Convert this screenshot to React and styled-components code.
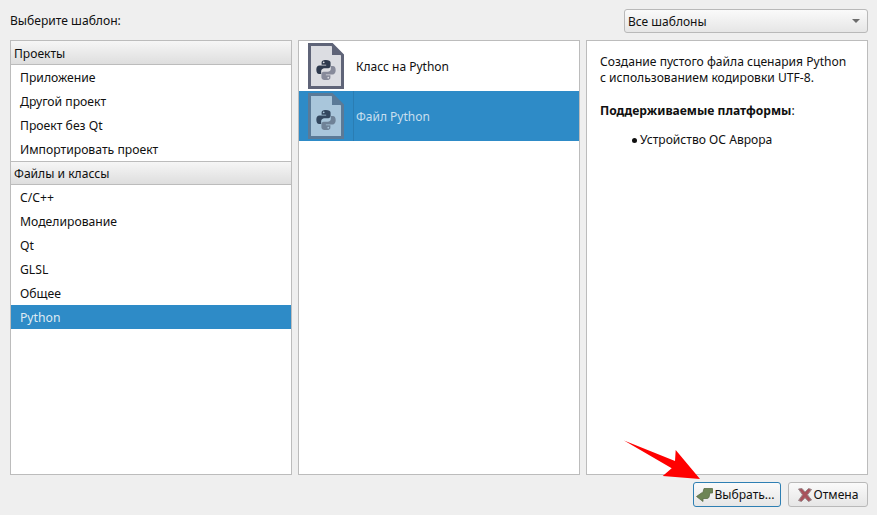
import styled, { createGlobalStyle } from "styled-components";

const Global = createGlobalStyle`
  html, body {
    margin: 0;
    padding: 0;
    background: #efefef;
  }
  body {
    font-family: "Noto Sans", "Open Sans", sans-serif;
    font-size: 12px;
    color: #101010;
  }
`;

const Dialog = styled.div`
  position: relative;
  width: 877px;
  height: 515px;
  overflow: hidden;
  box-sizing: border-box;
  padding: 9px 9px 8px 10px;
  display: flex;
  flex-direction: column;
  background: #efefef;
`;

const TopBar = styled.div`
  display: flex;
  align-items: center;
  justify-content: space-between;
  height: 24px;
  margin-bottom: 7px;
`;

const Label = styled.span`
  line-height: 24px;
  font-size: 12.1px;
`;

const Combo = styled.div`
  width: 244px;
  height: 24px;
  box-sizing: border-box;
  display: flex;
  align-items: center;
  justify-content: space-between;
  padding: 0 4px 0 3px;
  border: 1px solid #b9b9b9;
  border-radius: 3px;
  background: linear-gradient(#fafafa, #e6e6e6);
`;

const ComboArrow = styled.span`
  width: 0;
  height: 0;
  margin-right: 3px;
  border-left: 4px solid transparent;
  border-right: 4px solid transparent;
  border-top: 4px solid #6c6c6c;
`;

const Panels = styled.div`
  display: grid;
  grid-template-columns: 282px 282px 282px;
  column-gap: 6px;
  height: 435px;
`;

const Panel = styled.div`
  box-sizing: border-box;
  border: 1px solid #bcbcbc;
  background: #fff;
  display: flex;
  flex-direction: column;
  min-height: 0;
`;

const SectionHeader = styled.div`
  box-sizing: border-box;
  height: 24px;
  padding-left: 3px;
  line-height: ${(p) => (p.$first ? "25px" : "23px")};
  font-size: 12.1px;
  border-bottom: 1px solid #bcbcbc;
  border-top: ${(p) => (p.$first ? "none" : "1px solid #bcbcbc")};
  background: linear-gradient(#f6f6f6, #dedede);
`;

const CategoryRow = styled.div`
  height: 24px;
  line-height: 26px;
  padding-left: 9px;
  font-size: 12.2px;
  background: ${(p) => (p.$selected ? "#2e8bc7" : "transparent")};
  color: ${(p) => (p.$selected ? "#dfeaf3" : "#101010")};
`;

const TemplateRow = styled.div`
  position: relative;
  height: 50px;
  display: flex;
  align-items: center;
  gap: 12px;
  padding-left: 9px;
  background: ${(p) => (p.$selected ? "#2e8bc7" : "transparent")};
  color: ${(p) => (p.$selected ? "#c9dfee" : "#101010")};
`;

const IconDivider = styled.span`
  position: absolute;
  left: 54px;
  top: 0;
  bottom: 0;
  width: 1px;
  background: #2a7db3;
`;

const Description = styled.div`
  padding: 13px 13px;
  line-height: 16px;
  font-size: 12.1px;
`;

const Paragraph = styled.p`
  margin: 0 0 17px;
`;

const Platform = styled.div`
  display: flex;
  align-items: center;
  gap: 3px;
  margin-top: -4px;
  padding-left: 32px;
`;

const Bullet = styled.span`
  width: 5px;
  height: 5px;
  border-radius: 50%;
  background: #101010;
`;

const Footer = styled.div`
  display: flex;
  justify-content: flex-end;
  gap: 7px;
  margin-top: 7px;
`;

const Button = styled.button`
  box-sizing: border-box;
  height: 25px;
  width: ${(p) => p.$width}px;
  display: flex;
  align-items: center;
  justify-content: center;
  gap: ${(p) => (p.$primary ? "1px" : "0")};
  padding: 0 ${(p) => (p.$primary ? "3px" : "0")} 0 0;
  font: inherit;
  font-size: 12.1px;
  color: #101010;
  border: 1px solid ${(p) => (p.$primary ? "#2e7fb3" : "#b9b9b9")};
  border-radius: 3px;
  background: linear-gradient(#fafafa, #e6e6e6);
`;

const ArrowOverlay = styled.svg`
  position: absolute;
  left: 620px;
  top: 436px;
  pointer-events: none;
`;

const FileIcon = ({ selected }) => {
  const edge = selected ? "#5b7a97" : "#5f6478";
  const fill = selected ? "#a9c6db" : "#dcdde2";
  const dark = selected ? "#33475f" : "#2f3a4e";
  const light = selected ? "#6f8297" : "#878a9a";
  return (
    <svg width="36" height="46" viewBox="0 0 36 46">
      <path
        d="M1.5 1.5H24L34.5 12V44.5H1.5Z"
        fill={fill}
        stroke={edge}
        strokeWidth="3"
      />
      <path d="M24 1V12H35Z" fill={edge} />
      <g transform="translate(18 27) scale(.88) translate(-18 -26.5)">
        <path
          d="M18 15c-4 0-5 1.4-5 3v2.5h5.2v1H10.5c-2 0-3.5 1.5-3.5 4.7 0 3.2 1.3 4.8 3.2 4.8H12.5v-3c0-2 1.7-3.5 3.5-3.5h4.6c1.5 0 2.6-1.2 2.6-2.7V18c0-1.7-2-3-5.2-3Zm-2.6 1.8a1 1 0 1 1 0 2 1 1 0 0 1 0-2Z"
          fill={dark}
        />
        <path
          d="M18 38c4 0 5-1.4 5-3v-2.5h-5.2v-1h7.7c2 0 3.5-1.5 3.5-4.7 0-3.2-1.3-4.8-3.2-4.8H23.5v3c0 2-1.7 3.5-3.5 3.5h-4.6c-1.5 0-2.6 1.2-2.6 2.7V35c0 1.7 2 3 5.2 3Zm2.6-1.8a1 1 0 1 1 0-2 1 1 0 0 1 0 2Z"
          fill={light}
        />
      </g>
    </svg>
  );
};

const AcceptIcon = () => (
  <svg width="17" height="14" viewBox="0 0 17 14">
    <path
      d="M16.5 .5H8L6.8 4.8H5.8L.5 8.5L7 13.5V10.5H11C12.5 10.5 13 9.5 13.3 8L13.8 5H16.5Z"
      fill="#6e8556"
      stroke="#5a6c46"
      strokeWidth="0.8"
      strokeLinejoin="round"
    />
  </svg>
);

const CancelIcon = () => (
  <svg width="16" height="14" viewBox="0 0 16 14">
    <path
      d="M.5 1 4 .5 7 4 10.5 .5 13.5 1.5 9.5 6.8 13.5 12 10.5 13.5 7 9.8 3.5 13.5 .5 12.5 4.5 6.8Z"
      fill="#a8525c"
      stroke="#9a8a8c"
      strokeWidth="1"
      strokeLinejoin="round"
    />
  </svg>
);

const categories = [
  {
    title: "Проекты",
    items: ["Приложение", "Другой проект", "Проект без Qt", "Импортировать проект"],
  },
  {
    title: "Файлы и классы",
    items: ["C/C++", "Моделирование", "Qt", "GLSL", "Общее", "Python"],
  },
];

const App = () => (
  <Dialog>
    <Global />
    <TopBar>
      <Label>Выберите шаблон:</Label>
      <Combo>
        Все шаблоны
        <ComboArrow />
      </Combo>
    </TopBar>
    <Panels>
      <Panel>
        {categories.map((group, i) => (
          <div key={group.title}>
            <SectionHeader $first={i === 0}>{group.title}</SectionHeader>
            {group.items.map((item) => (
              <CategoryRow key={item} $selected={item === "Python"}>
                {item}
              </CategoryRow>
            ))}
          </div>
        ))}
      </Panel>
      <Panel>
        <TemplateRow>
          <FileIcon />
          Класс на Python
        </TemplateRow>
        <TemplateRow $selected>
          <FileIcon selected />
          <IconDivider />
          Файл Python
        </TemplateRow>
      </Panel>
      <Panel>
        <Description>
          <Paragraph>
            Создание пустого файла сценария Python
            <br />
            с использованием кодировки UTF-8.
          </Paragraph>
          <Paragraph>
            <b>Поддерживаемые платформы</b>:
          </Paragraph>
          <Platform>
            <Bullet />
            Устройство ОС Аврора
          </Platform>
        </Description>
      </Panel>
    </Panels>
    <Footer>
      <Button $primary $width={88}>
        <AcceptIcon />
        Выбрать...
      </Button>
      <Button $width={80}>
        <CancelIcon />
        Отмена
      </Button>
    </Footer>
    <ArrowOverlay width="90" height="50" viewBox="620 436 90 50">
      <polygon
        points="624,440.5 675,461 675.7,450 700,479 662.7,476 671.7,468.3"
        fill="#ff0000"
      />
    </ArrowOverlay>
  </Dialog>
);

export default App;
